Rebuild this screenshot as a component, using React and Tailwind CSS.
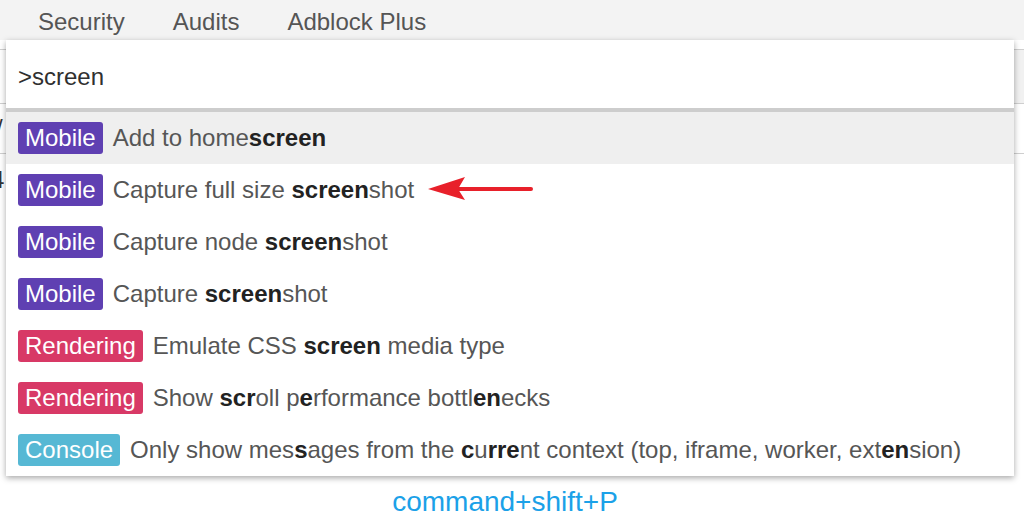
import React from 'react';

const tabs = ['Security', 'Audits', 'Adblock Plus'];

const badgeColors = {
  Mobile: 'bg-[#5f40b2]',
  Rendering: 'bg-[#d83966]',
  Console: 'bg-[#56b8d4]',
};

// each title is split into [text, isMatch] pieces
const rows = [
  { tag: 'Mobile', parts: [['Add to home', false], ['screen', true]], active: true },
  { tag: 'Mobile', parts: [['Capture full size ', false], ['screen', true], ['shot', false]] },
  { tag: 'Mobile', parts: [['Capture node ', false], ['screen', true], ['shot', false]] },
  { tag: 'Mobile', parts: [['Capture ', false], ['screen', true], ['shot', false]] },
  { tag: 'Rendering', parts: [['Emulate CSS ', false], ['screen', true], [' media type', false]] },
  {
    tag: 'Rendering',
    parts: [
      ['Show ', false], ['scr', true], ['oll p', false], ['e', true],
      ['rformance bottl', false], ['en', true], ['ecks', false],
    ],
  },
  {
    tag: 'Console',
    parts: [
      ['Only show mes', false], ['s', true], ['ages from the ', false], ['c', true],
      ['u', false], ['rre', true], ['nt context (top, iframe, worker, ext', false],
      ['en', true], ['sion)', false],
    ],
  },
];

const Row = ({ tag, parts, active }) => (
  <div className={`h-[52px] flex items-center pl-[12px] ${active ? 'bg-[#efefef]' : 'bg-white'}`}>
    <span className={`h-[32px] leading-[32px] px-[7px] rounded-[3px] text-white ${badgeColors[tag]}`}>
      {tag}
    </span>
    <span className="ml-[10px] text-[#565656] whitespace-pre leading-[32px]">
      {parts.map(([t, bold], i) =>
        bold ? (
          <b key={i} className="font-bold text-[#222]">{t}</b>
        ) : (
          <span key={i}>{t}</span>
        )
      )}
    </span>
  </div>
);

const App = () => {
  return (
    <div className="w-[1024px] h-[528px] bg-white overflow-hidden text-[24px] font-['Liberation_Sans',Arial,sans-serif]">
      <div className="h-[40px] bg-[#f3f3f3] flex pl-[14px] pt-[6px] text-[#555] leading-[32px]">
        {tabs.map((t) => (
          <div key={t} className="px-[24px]">{t}</div>
        ))}
      </div>

      <div className="relative">
        {/* panel content behind the popup */}
        <div className="absolute inset-0 pointer-events-none">
          <div className="absolute left-0 right-0 top-[9px] h-px bg-[#cfcfcf]" />
          <div className="absolute left-0 right-0 top-[63px] h-px bg-[#cfcfcf]" />
          <div className="absolute left-0 right-0 top-[113px] h-px bg-[#cfcfcf]" />
          <div className="absolute left-[1014px] right-0 top-[10px] h-[53px] bg-[#f1f1f1]" />
          <span className="absolute left-[-4px] top-[72px] text-[#333] leading-[32px]">/</span>
          <span className="absolute left-[-9px] top-[124px] text-[#333] leading-[32px]">4</span>
        </div>

        <div className="relative ml-[6px] w-[1008px] bg-white shadow-[0_2px_6px_rgba(0,0,0,0.35)]">
          <div className="h-[68px] pl-[12px] pt-[21px] leading-[32px] text-[#303030]">&gt;screen</div>
          <div className="h-[4px] bg-[#cdcdcd]" />
          {rows.map((r, i) => (
            <Row key={i} {...r} />
          ))}

          {/* annotation arrow */}
          <svg className="absolute left-[420px] top-[136px]" width="112" height="30" viewBox="0 0 112 30">
            <line x1="30" y1="13" x2="105" y2="13" stroke="#e8202a" strokeWidth="4" strokeLinecap="round" />
            <path d="M2 13 L39 1 L32 13 L39 24 Z" fill="#e8202a" />
          </svg>
        </div>

        <div className="flex justify-center pr-[14px] mt-[9px] text-[28px] leading-[34px] text-[#1ba1e8]">
          command+shift+P
        </div>
      </div>
    </div>
  );
};

export default App;
